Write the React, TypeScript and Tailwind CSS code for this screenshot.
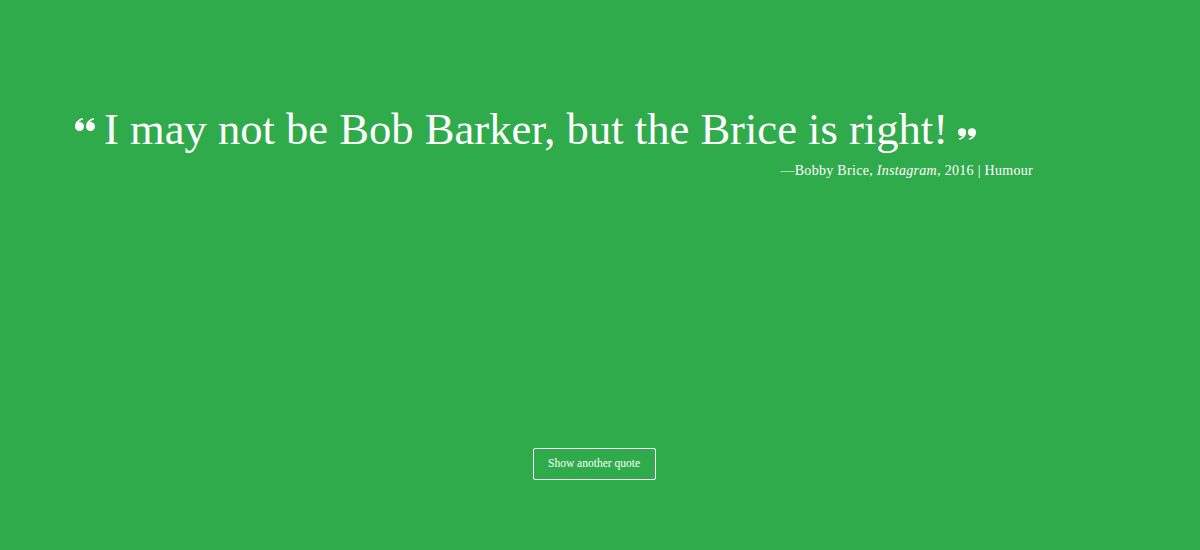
export default function App() {
    return (
        <div className="min-h-[550px] w-full bg-[#30ab4b] text-white" style={{ fontFamily: '"Liberation Serif", serif' }}>
            <div className="px-[75px] pt-[103px]">
                {/* Quote */}
                <div className="flex items-start">
                    <svg viewBox="0 0 20 13" className="mt-[15px] mr-[9px] h-[13px] w-[20px] fill-white">
                        <path d="M4.5 13A4.5 4.5 0 0 1 0 8.5C0 4.5 3 1.2 7.5 0l.7 1.3C5.5 2.5 4.2 3.5 3.8 4.1 6.5 3.8 9 5.5 9 8.5A4.5 4.5 0 0 1 4.5 13z" />
                        <path d="M15.5 13A4.5 4.5 0 0 1 11 8.5C11 4.5 14 1.2 18.5 0l.7 1.3c-2.7 1.2-4 2.2-4.4 2.8 2.7-.3 5.2 1.4 5.2 4.4a4.5 4.5 0 0 1-4.5 4.5z" />
                    </svg>
                    <p className="text-[44.6px] leading-[52px]">I may not be Bob Barker, but the Brice is right!</p>
                    <svg viewBox="0 0 20 13" className="mt-[24px] ml-[10px] h-[14px] w-[18px] fill-white">
                        <path d="M4.5 0A4.5 4.5 0 0 1 9 4.5C9 8.5 6 11.8 1.5 13L.8 11.7C3.5 10.5 4.8 9.5 5.2 8.9 2.5 9.2 0 7.5 0 4.5A4.5 4.5 0 0 1 4.5 0z" />
                        <path d="M15.5 0A4.5 4.5 0 0 1 20 4.5c0 4-3 7.3-7.5 8.5l-.7-1.3c2.7-1.2 4-2.2 4.4-2.8-2.7.3-5.2-1.4-5.2-4.4A4.5 4.5 0 0 1 15.5 0z" />
                    </svg>
                </div>
                <div className="mt-[5px] w-[958px] text-right text-[14px] tracking-[0.3px]">
                    —Bobby Brice, <em>Instagram</em>, 2016 | Humour
                </div>
            </div>

            {/* Button */}
            <div className="flex justify-center pt-[267px] pr-[12px]">
                <button className="h-[32px] w-[123px] rounded-[2px] border-[1.5px] border-white text-[11.5px] text-white">
                    Show another quote
                </button>
            </div>
        </div>
    )
}
